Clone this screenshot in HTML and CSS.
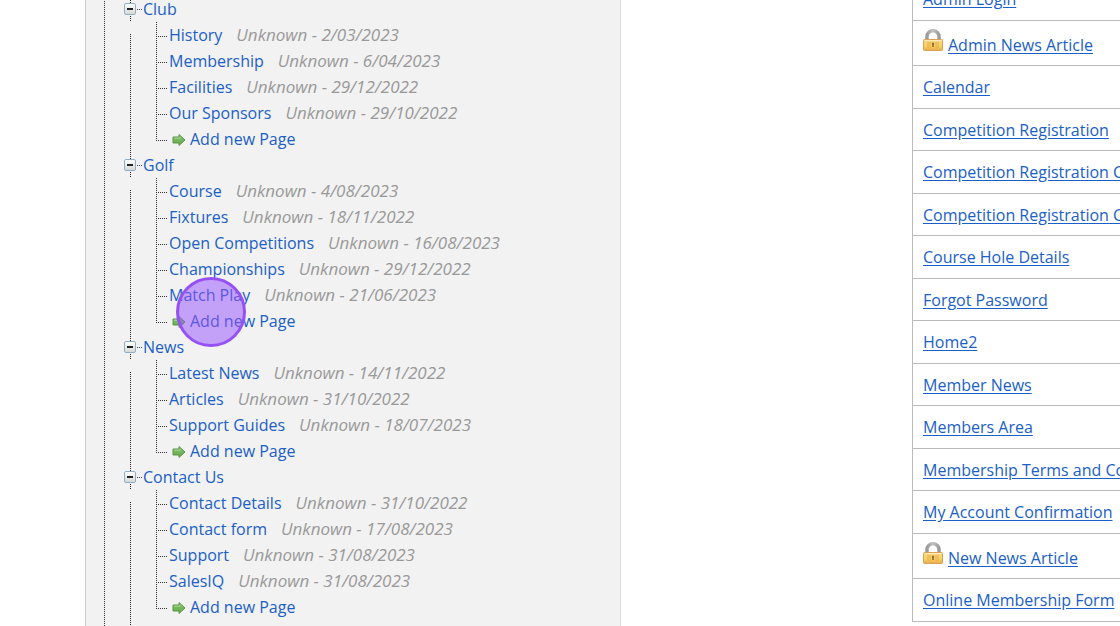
FILE: index.html
```
<!DOCTYPE html>
<html lang="en">
<head>
    <meta charset="UTF-8">
    <meta name="viewport" content="width=device-width, initial-scale=1.0">
    <title>Site Pages</title>
    <link rel="stylesheet" href="styles.css">
</head>
<body>
    <svg class="sprite" width="0" height="0" aria-hidden="true">
        <defs>
            <linearGradient id="leaf" x1="0" y1="0" x2="0" y2="1">
                <stop offset="0" stop-color="#8cc474"/>
                <stop offset="1" stop-color="#5fa846"/>
            </linearGradient>
            <linearGradient id="gold" x1="0" y1="0" x2="0" y2="1">
                <stop offset="0" stop-color="#fbd98a"/>
                <stop offset="0.6" stop-color="#f8d264"/>
                <stop offset="1" stop-color="#e9a94c"/>
            </linearGradient>
            <linearGradient id="steel" x1="0" y1="0" x2="1" y2="0">
                <stop offset="0" stop-color="#999"/>
                <stop offset="0.5" stop-color="#c4c4c4"/>
                <stop offset="1" stop-color="#999"/>
            </linearGradient>
        </defs>
        <symbol id="arrow" viewBox="0 0 14 12">
            <path d="M1 3h6V0.500l6 5.500-6 5.500V9H1z" fill="url(#leaf)" stroke="#5b9648" stroke-linejoin="round"/>
            <path d="M2 4.200h6V2.800" fill="none" stroke="#b5dca4" stroke-width="0.8"/>
        </symbol>
        <symbol id="lock" viewBox="0 0 20 22">
            <path d="M4 11V7.500a6 5.800 0 0 1 12 0V11" fill="none" stroke="url(#steel)" stroke-width="3.5"/>
            <rect x="0.500" y="10.500" width="19" height="11" rx="1" fill="url(#gold)" stroke="#dca052"/>
            <path d="M1.500 11.500h17" stroke="#fdebbd"/>
            <path d="M4 14h4M4 16h4M4 18h4M12 14h4M12 16h4M12 18h4" stroke="#e5ad45"/>
            <path d="M10 13.500a1.200 1.200 0 0 1 .8 2.100v2.400H9.200v-2.400a1.200 1.200 0 0 1 .8-2.100z" fill="#8a6a2c"/>
        </symbol>
    </svg>

    <div class="page">
        <nav class="panel" aria-label="Menu pages">
            <ul class="tree">
                <li>
                    <div class="branch"><button class="toggle" aria-label="Collapse Club"></button><a href="#">Club</a></div>
                    <ul class="children">
                        <li><a href="#">History</a><span class="info">Unknown - 2/03/2023</span></li>
                        <li><a href="#">Membership</a><span class="info">Unknown - 6/04/2023</span></li>
                        <li><a href="#">Facilities</a><span class="info">Unknown - 29/12/2022</span></li>
                        <li><a href="#">Our Sponsors</a><span class="info">Unknown - 29/10/2022</span></li>
                        <li><svg class="arrow"><use href="#arrow"/></svg><a href="#">Add new Page</a></li>
                    </ul>
                </li>
                <li>
                    <div class="branch"><button class="toggle" aria-label="Collapse Golf"></button><a href="#">Golf</a></div>
                    <ul class="children">
                        <li><a href="#">Course</a><span class="info">Unknown - 4/08/2023</span></li>
                        <li><a href="#">Fixtures</a><span class="info">Unknown - 18/11/2022</span></li>
                        <li><a href="#">Open Competitions</a><span class="info">Unknown - 16/08/2023</span></li>
                        <li><a href="#">Championships</a><span class="info">Unknown - 29/12/2022</span></li>
                        <li><a href="#">Match Play</a><span class="info">Unknown - 21/06/2023</span></li>
                        <li><svg class="arrow"><use href="#arrow"/></svg><a href="#">Add new Page</a></li>
                    </ul>
                </li>
                <li>
                    <div class="branch"><button class="toggle" aria-label="Collapse News"></button><a href="#">News</a></div>
                    <ul class="children">
                        <li><a href="#">Latest News</a><span class="info">Unknown - 14/11/2022</span></li>
                        <li><a href="#">Articles</a><span class="info">Unknown - 31/10/2022</span></li>
                        <li><a href="#">Support Guides</a><span class="info">Unknown - 18/07/2023</span></li>
                        <li><svg class="arrow"><use href="#arrow"/></svg><a href="#">Add new Page</a></li>
                    </ul>
                </li>
                <li>
                    <div class="branch"><button class="toggle" aria-label="Collapse Contact Us"></button><a href="#">Contact Us</a></div>
                    <ul class="children">
                        <li><a href="#">Contact Details</a><span class="info">Unknown - 31/10/2022</span></li>
                        <li><a href="#">Contact form</a><span class="info">Unknown - 17/08/2023</span></li>
                        <li><a href="#">Support</a><span class="info">Unknown - 31/08/2023</span></li>
                        <li><a href="#">SalesIQ</a><span class="info">Unknown - 31/08/2023</span></li>
                        <li><svg class="arrow"><use href="#arrow"/></svg><a href="#">Add new Page</a></li>
                    </ul>
                </li>
            </ul>
        </nav>

        <table class="pages">
            <tbody>
                <tr><td><a href="#">Admin Login</a></td></tr>
                <tr class="locked"><td><svg class="lock"><use href="#lock"/></svg><a href="#">Admin News Article</a></td></tr>
                <tr><td><a href="#">Calendar</a></td></tr>
                <tr><td><a href="#">Competition Registration</a></td></tr>
                <tr><td><a href="#">Competition Registration Complete</a></td></tr>
                <tr><td><a href="#">Competition Registration Confirmation</a></td></tr>
                <tr><td><a href="#">Course Hole Details</a></td></tr>
                <tr><td><a href="#">Forgot Password</a></td></tr>
                <tr><td><a href="#">Home2</a></td></tr>
                <tr><td><a href="#">Member News</a></td></tr>
                <tr><td><a href="#">Members Area</a></td></tr>
                <tr><td><a href="#">Membership Terms and Conditions</a></td></tr>
                <tr><td><a href="#">My Account Confirmation</a></td></tr>
                <tr class="locked"><td><svg class="lock"><use href="#lock"/></svg><a href="#">New News Article</a></td></tr>
                <tr><td><a href="#">Online Membership Form</a></td></tr>
            </tbody>
        </table>

        <div class="click-marker"></div>
    </div>
</body>
</html>
```
FILE: styles.css
```
* {
    margin: 0;
    padding: 0;
    box-sizing: border-box;
}

body {
    min-height: 100vh;
    overflow: hidden;
    background-color: white;
    font-family: "Open Sans", "Noto Sans", sans-serif;
    font-size: 16px;
    line-height: 24px;
    color: #999;
}

a {
    color: #1a60c6;
}

.sprite {
    position: absolute;
}

.page {
    position: relative;
    min-height: 100vh;
    padding-left: 85px;
    display: grid;
    grid-template-columns: minmax(0, 536fr) minmax(0, 291fr) minmax(0, 208fr);
    align-items: start;
}

/* menu tree */
.panel {
    min-height: 100vh;
    padding-left: 18px;
    background-color: #f2f2f2;
    border-left: 1px solid #ccc;
    border-right: 1px solid #ddd;
}

.tree,
.children {
    list-style: none;
}

.tree {
    margin-top: -4px;
    padding-bottom: 6px;
    border-left: 1px dotted #333;
    background: repeating-linear-gradient(#222 0 1px, transparent 1px 2px) 25px 100% / 1px 8px no-repeat;
}

.tree a {
    text-decoration: none;
}

.branch,
.children li {
    height: 26px;
    display: flex;
    align-items: center;
    white-space: nowrap;
}

.branch {
    margin-left: 19px;
    gap: 7px;
    background:
        repeating-linear-gradient(#222 0 1px, transparent 1px 2px) 6px 0 / 1px 25px no-repeat,
        repeating-linear-gradient(90deg, #444 0 1px, transparent 1px 2px) 13px 13px / 5px 1px no-repeat;
}

.toggle {
    width: 12px;
    height: 12px;
    border: 1px solid #8eafc8;
    border-radius: 2px;
    background:
        linear-gradient(#222, #222) center / 6px 2px no-repeat,
        linear-gradient(#fff, #d8d8d4);
    cursor: pointer;
}

/* trunk line leaves a gap under the parent row */
.children {
    padding-left: 51px;
    background: repeating-linear-gradient(#222 0 1px, transparent 1px 2px) 25px 12px / 1px 100% no-repeat;
}

.children li {
    padding-left: 13px;
    background:
        repeating-linear-gradient(#333 0 1px, transparent 1px 2px) 0 0 / 1px 100% no-repeat,
        repeating-linear-gradient(90deg, #333 0 1px, transparent 1px 2px) 0 14px / 12px 1px no-repeat;
}

.children li:last-child {
    background-size: 1px 14px, 12px 1px;
}

.info {
    margin-left: 14px;
    font-size: 17px;
    font-style: italic;
}

.arrow {
    width: 14px;
    height: 12px;
    margin: 2px 4px 0 3px;
}

/* page list */
.pages {
    grid-column: 3;
    width: 100%;
    margin-top: -22px;
    border-collapse: separate;
    border-spacing: 0;
    border-left: 1px solid #bbb;
}

.pages td {
    height: 43px;
    padding: 0 10px;
    border-bottom: 1px solid #bbb;
    white-space: nowrap;
}

.pages tr:nth-child(even) td {
    height: 42px;
}

.pages tr.locked:nth-child(n) td {
    height: 45px;
}

.pages a {
    text-underline-offset: 2px;
}

.lock {
    width: 20px;
    height: 22px;
    margin-right: 5px;
}

.click-marker {
    position: absolute;
    left: 176px;
    top: 277px;
    width: 70px;
    height: 70px;
    border: 3px solid #9651f5;
    border-radius: 50%;
    background-color: rgba(150, 80, 255, 0.5);
    pointer-events: none;
}
```
